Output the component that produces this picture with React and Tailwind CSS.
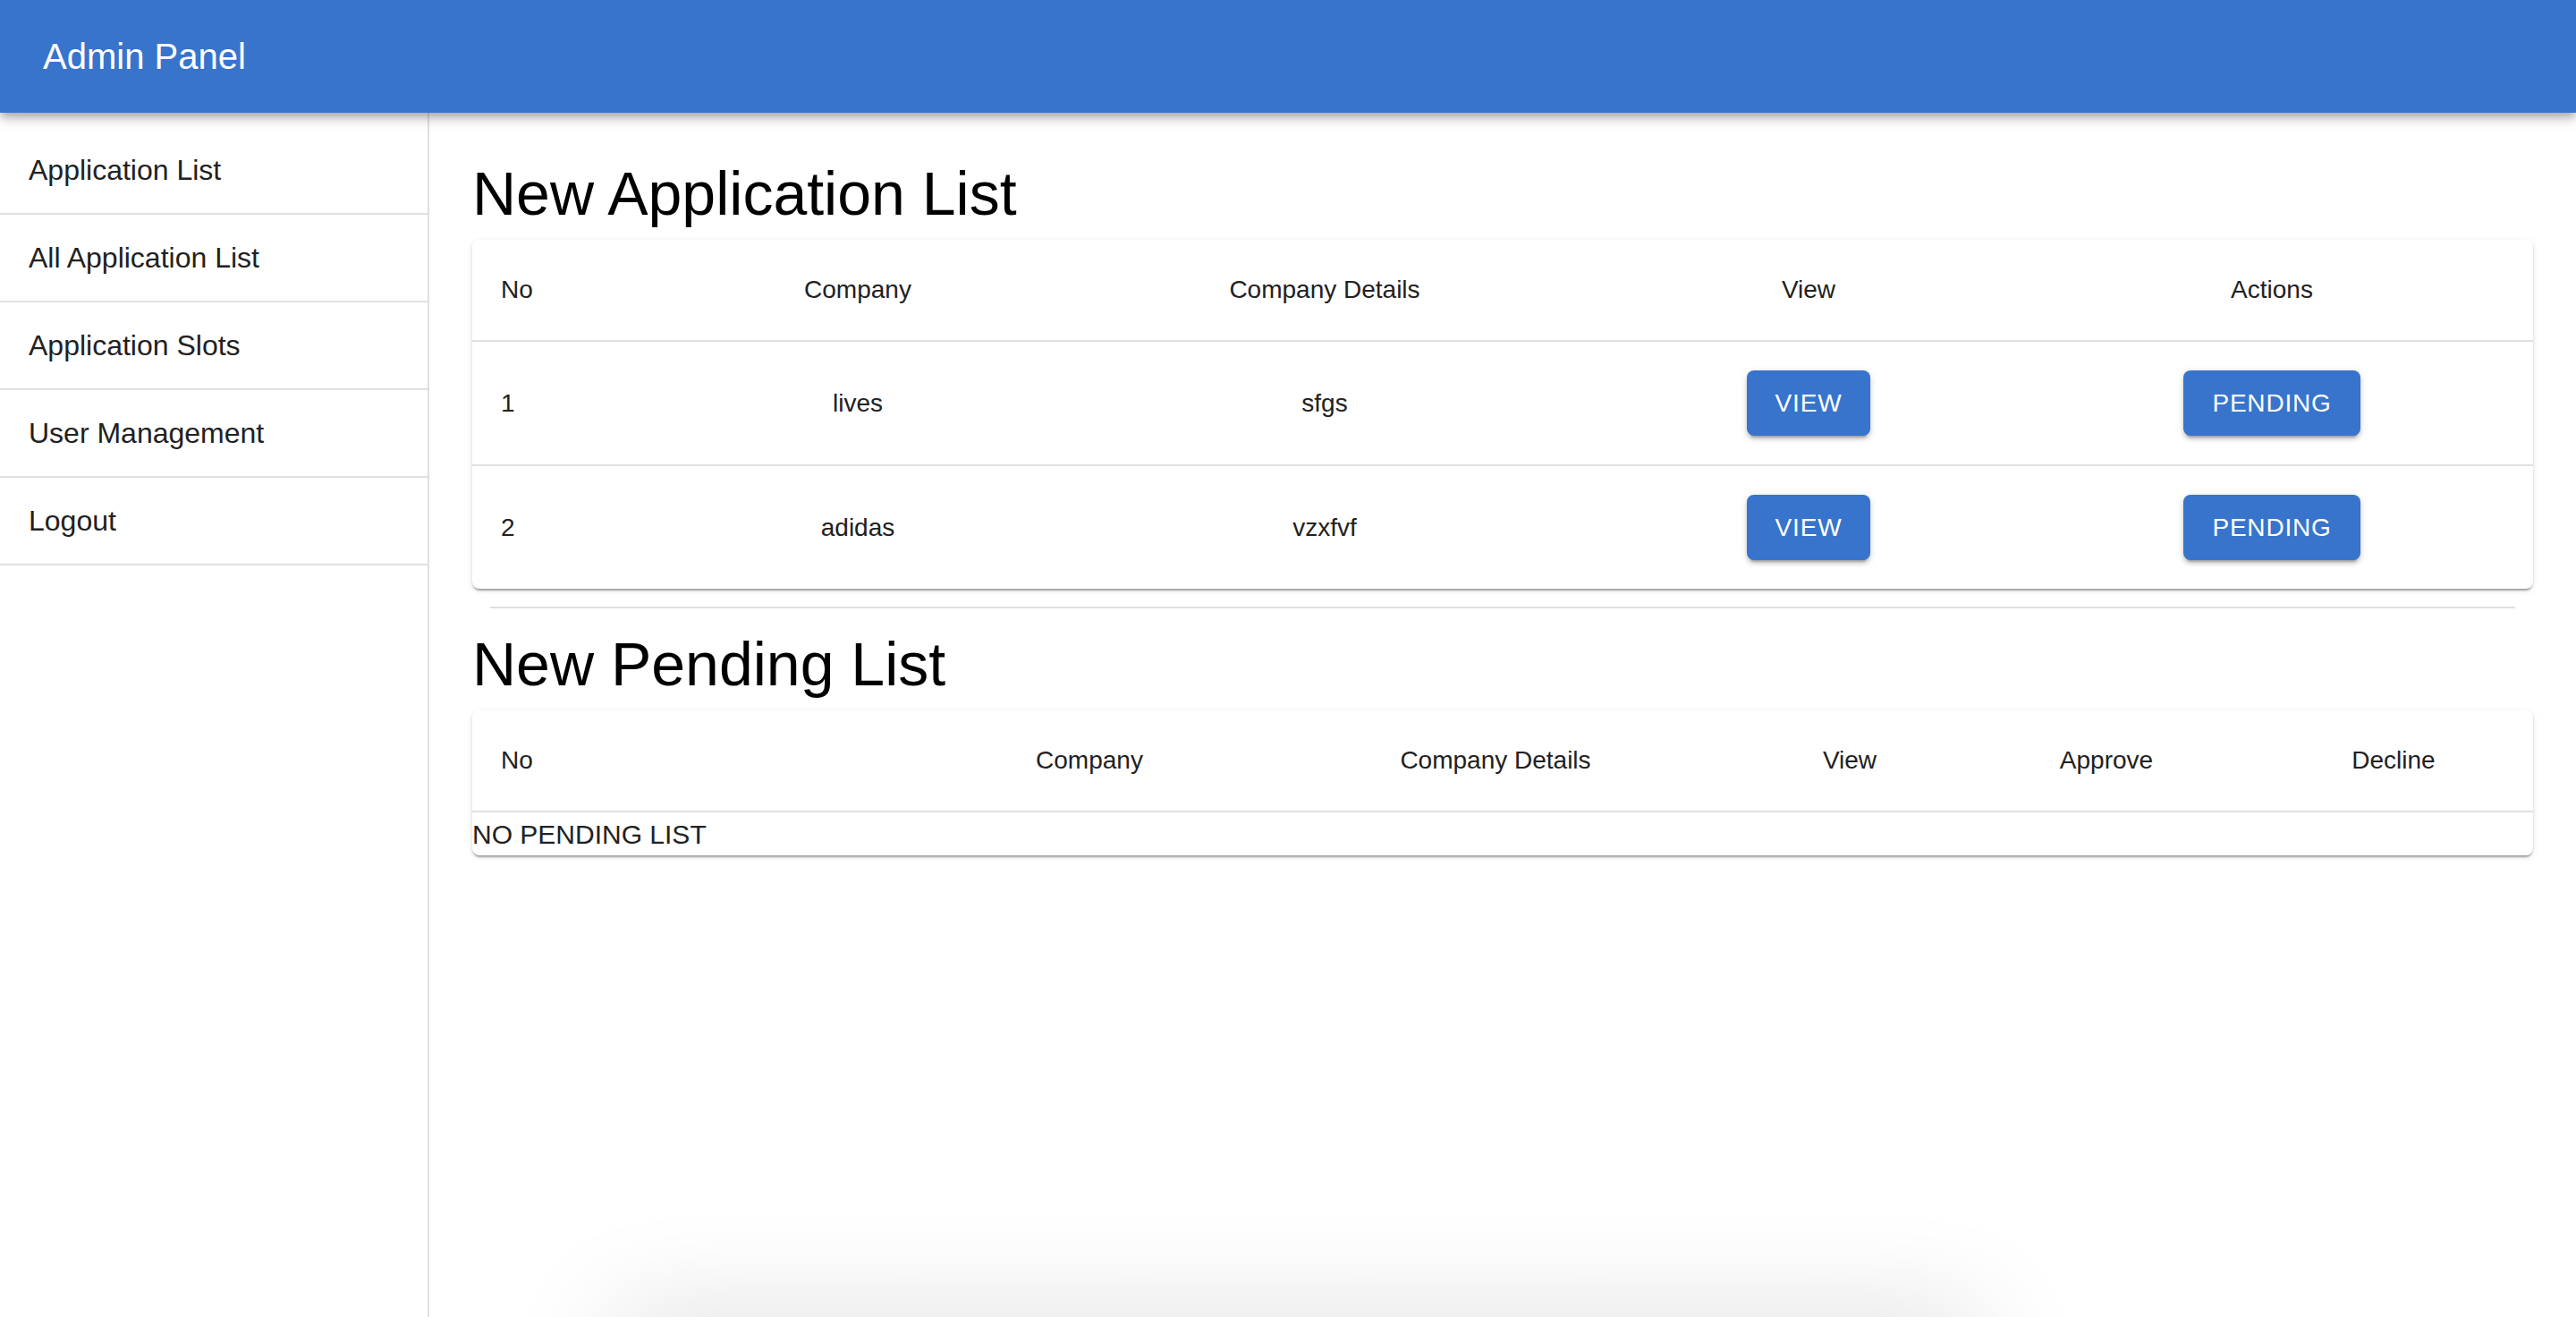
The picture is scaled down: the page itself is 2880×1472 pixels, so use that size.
import React from 'react';

const navItems = ['Application List', 'All Application List', 'Application Slots', 'User Management', 'Logout'];

const applications = [
  { no: 1, company: 'lives', details: 'sfgs' },
  { no: 2, company: 'adidas', details: 'vzxfvf' },
];

// MUI-ish contained button, drawn at 2x
function BlueButton({ children }) {
  return (
    <button
      type="button"
      className="h-[73px] px-[32px] rounded-[8px] bg-[#3874cb] text-white text-[28px] tracking-[0.8px] uppercase font-normal shadow-[0_6px_2px_-4px_rgba(0,0,0,0.2),0_4px_4px_0_rgba(0,0,0,0.14),0_2px_10px_0_rgba(0,0,0,0.12)]"
    >
      {children}
    </button>
  );
}

function Paper({ children }) {
  return (
    <div className="bg-white rounded-[8px] overflow-hidden shadow-[0_4px_2px_-2px_rgba(0,0,0,0.2),0_2px_2px_0_rgba(0,0,0,0.14),0_2px_6px_0_rgba(0,0,0,0.12)]">
      {children}
    </div>
  );
}

const th = 'py-[32px] px-[32px] leading-[48px] text-[28px] font-normal text-[#212121] border-b-2 border-[#e0e0e0]';

export default function App() {
  return (
    <div className="relative w-full h-[1472px] overflow-hidden flex flex-col bg-white font-['Liberation_Sans',Arial,sans-serif]">
      {/* App bar */}
      <header className="relative z-10 h-[126px] shrink-0 flex items-center px-[48px] bg-[#3874cb] shadow-[0_4px_8px_-2px_rgba(0,0,0,0.2),0_8px_10px_0_rgba(0,0,0,0.14),0_2px_20px_0_rgba(0,0,0,0.12)]">
        <h1 className="text-[40px] text-white font-normal leading-none">Admin Panel</h1>
      </header>

      <div className="flex flex-1 min-h-0">
        {/* Sidebar */}
        <nav className="w-[480px] shrink-0 border-r-2 border-[#e0e0e0] pt-[16px]">
          {navItems.map((item) => (
            <div
              key={item}
              className="h-[98px] flex items-center px-[32px] border-b-2 border-[#e0e0e0] text-[32px] text-[#212121]"
            >
              {item}
            </div>
          ))}
        </nav>

        {/* Main content */}
        <main className="flex-1 p-[48px]">
          <h2 className="h-[84px] leading-[84px] text-[68px] text-black font-normal mb-[10px]">New Application List</h2>
          <Paper>
            <table className="w-full table-fixed border-collapse">
              <colgroup>
                <col className="w-[224px]" />
                <col className="w-[414px]" />
                <col className="w-[630px]" />
                <col className="w-[452px]" />
                <col />
              </colgroup>
              <thead>
                <tr>
                  <th className={`${th} text-left`}>No</th>
                  <th className={`${th} text-center`}>Company</th>
                  <th className={`${th} text-center`}>Company Details</th>
                  <th className={`${th} text-center`}>View</th>
                  <th className={`${th} text-center`}>Actions</th>
                </tr>
              </thead>
              <tbody>
                {applications.map((app, i) => {
                  const border = i < applications.length - 1 ? 'border-b-2 border-[#e0e0e0]' : '';
                  const td = `py-[32px] px-[32px] text-[28px] text-[#212121] ${border}`;
                  return (
                    <tr key={app.no}>
                      <td className={`${td} text-left`}>{app.no}</td>
                      <td className={`${td} text-center`}>{app.company}</td>
                      <td className={`${td} text-center`}>{app.details}</td>
                      <td className={`${td} text-center`}>
                        <BlueButton>View</BlueButton>
                      </td>
                      <td className={`${td} text-center`}>
                        <BlueButton>Pending</BlueButton>
                      </td>
                    </tr>
                  );
                })}
              </tbody>
            </table>
          </Paper>

          <div className="mx-[20px] my-[20px] h-[2px] bg-[#e0e0e0]" />

          <h2 className="h-[84px] leading-[84px] text-[68px] text-black font-normal mb-[10px]">New Pending List</h2>
          <Paper>
            <table className="w-full table-fixed border-collapse">
              <colgroup>
                <col className="w-[510px]" />
                <col className="w-[360px]" />
                <col className="w-[548px]" />
                <col className="w-[244px]" />
                <col className="w-[330px]" />
                <col />
              </colgroup>
              <thead>
                <tr>
                  <th className={`${th} text-left`}>No</th>
                  <th className={`${th} text-center`}>Company</th>
                  <th className={`${th} text-center`}>Company Details</th>
                  <th className={`${th} text-center`}>View</th>
                  <th className={`${th} text-center`}>Approve</th>
                  <th className={`${th} text-center`}>Decline</th>
                </tr>
              </thead>
            </table>
            <div className="h-[48px] flex items-center text-[30px] text-[#222]">NO PENDING LIST</div>
          </Paper>
        </main>
      </div>

      {/* soft shadow of something just below the window edge */}
      <div className="absolute left-[680px] top-[1476px] w-[1540px] h-[60px] rounded-[40px] bg-white shadow-[0_0_120px_rgba(0,0,0,0.18)]" />
    </div>
  );
}
